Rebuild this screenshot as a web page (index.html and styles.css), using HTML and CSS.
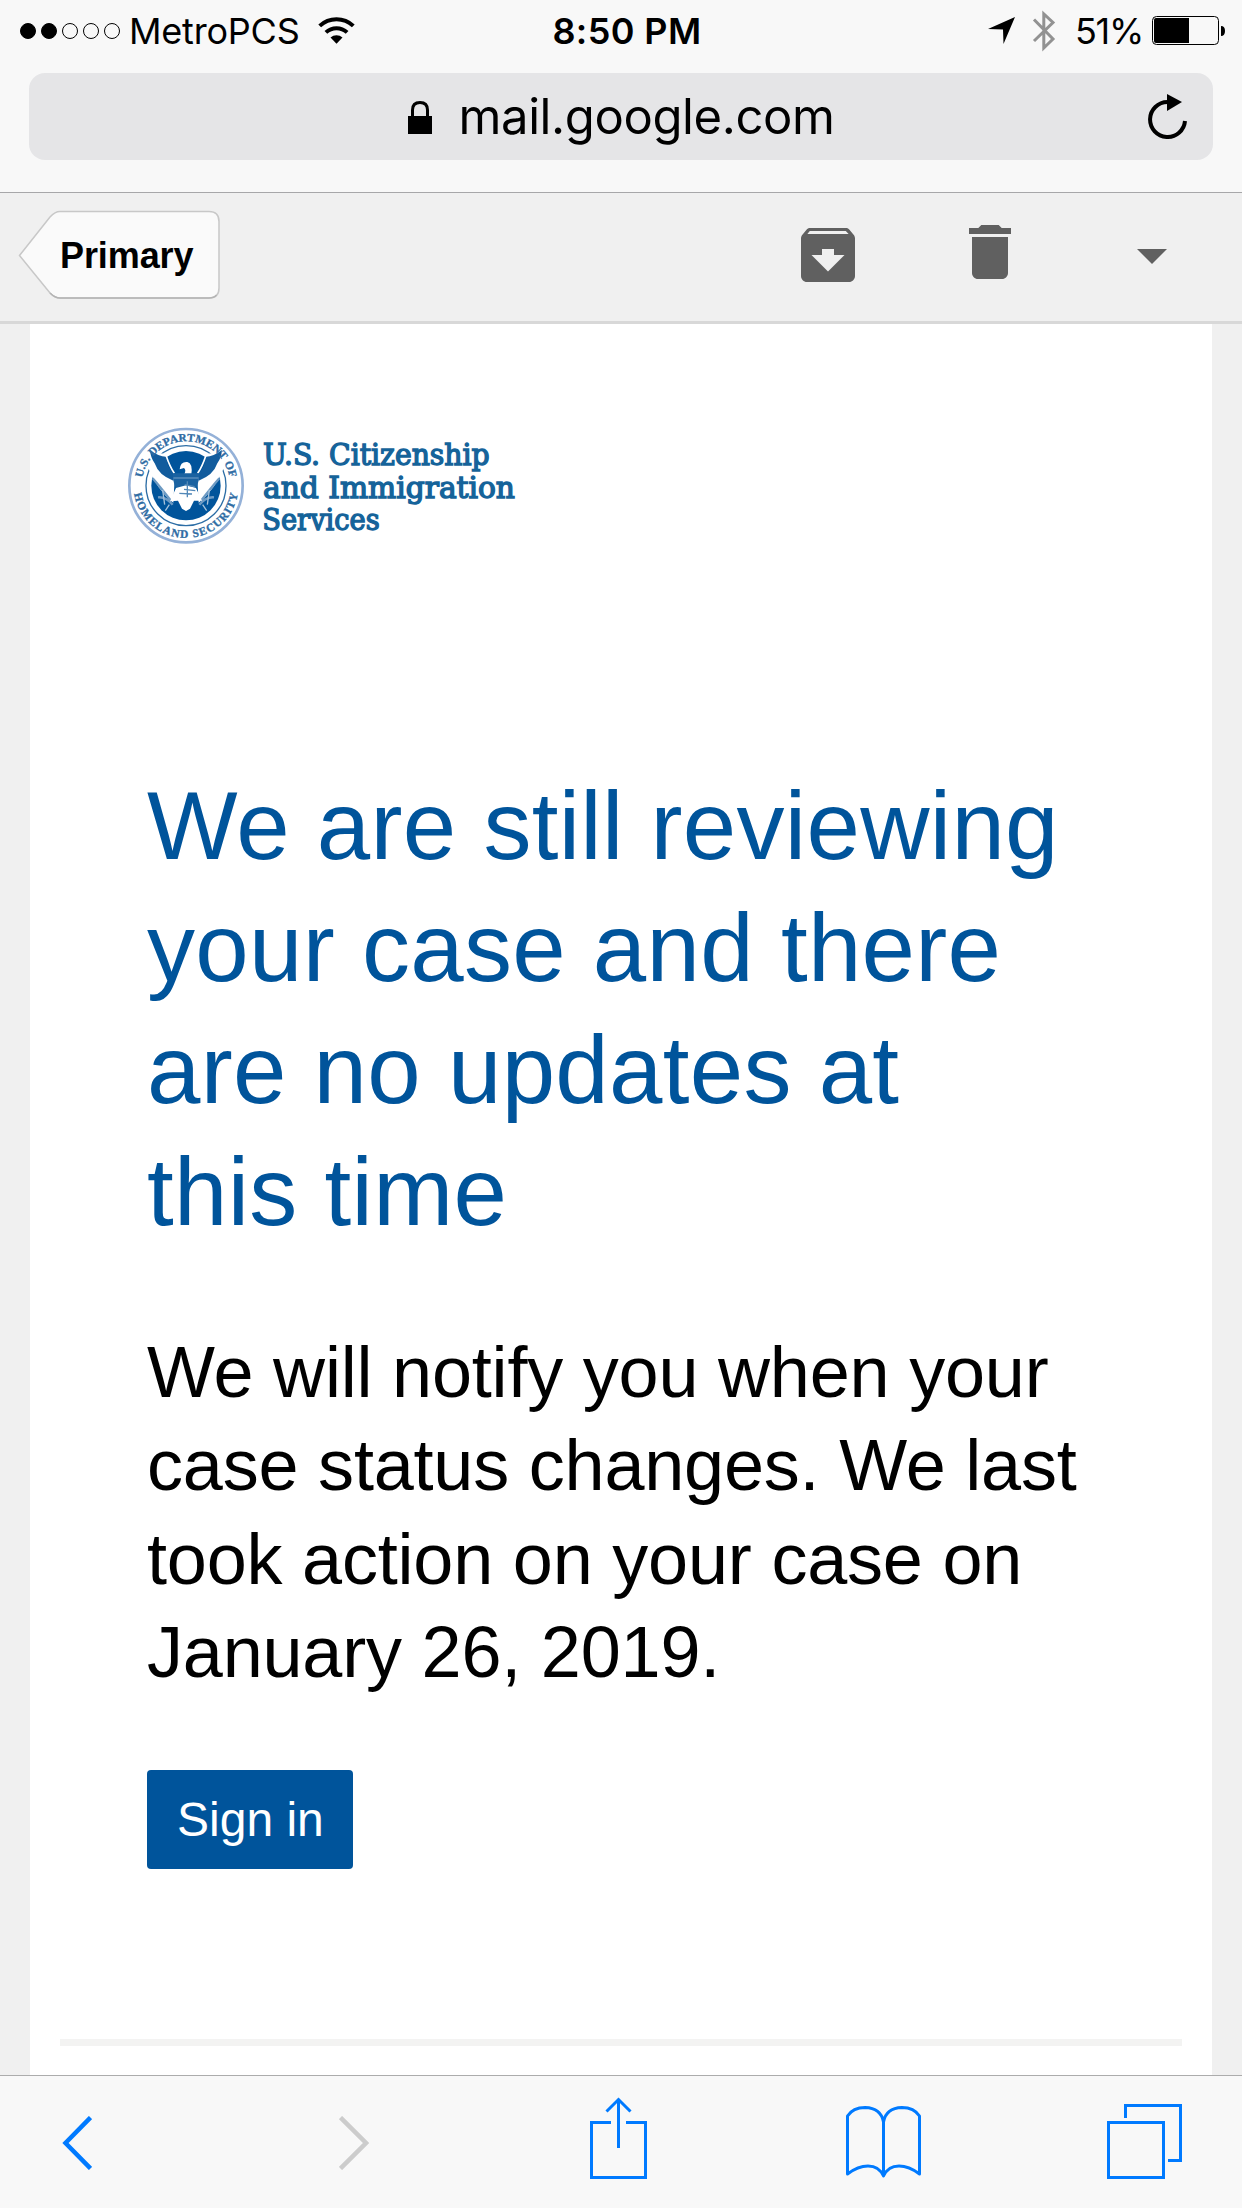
FILE: index.html
```html
<!DOCTYPE html>
<html lang="en">
<head>
    <meta charset="UTF-8">
    <meta name="viewport" content="width=device-width, initial-scale=1.0">
    <title>mail.google.com</title>
    <link rel="stylesheet" href="styles.css">
</head>
<body>
    <header class="browser-top">
        <div class="status-bar">
            <div class="status-left">
                <div class="signal">
                    <span class="dot full"></span>
                    <span class="dot full"></span>
                    <span class="dot"></span>
                    <span class="dot"></span>
                    <span class="dot"></span>
                </div>
                <span class="carrier">MetroPCS</span>
                <svg class="wifi" viewBox="0 0 37 27" fill="none" stroke="#000">
                    <path d="M1.7 8.9a24.6 24.6 0 0 1 33.6 0" stroke-width="4"/>
                    <path d="M7.9 15.4a15.6 15.6 0 0 1 21.2 0" stroke-width="4"/>
                    <path d="M12.5 20.6a8.7 8.7 0 0 1 12 0l-6 6.1z" fill="#000" stroke="none"/>
                </svg>
            </div>
            <span class="time">8:50 PM</span>
            <div class="status-right">
                <svg class="location" viewBox="0 0 27 27"><path d="M0 12L27 0 15.500 27 15 12.500z"/></svg>
                <svg class="bluetooth" viewBox="0 0 24 42"><path d="M2 9.500L21 29 11.800 38V4L21 12.500 2 31" fill="none" stroke="#929292" stroke-width="3"/></svg>
                <span class="percent">51%</span>
                <svg class="battery" viewBox="0 0 74 29">
                    <rect x=".5" y=".5" width="66" height="28" rx="4" fill="none" stroke="#000"/>
                    <rect x="2" y="2" width="35" height="25" rx="2"/>
                    <path d="M37 2v25h-4V2zM69 10q4 0 4 5t-4 5z"/>
                </svg>
            </div>
        </div>
        <div class="address">
            <div class="address-text">
                <svg class="lock" viewBox="0 0 24 33">
                    <path d="M0 15h24v18H0z"/>
                    <path d="M4.500 16V9q0-7.500 7.500-7.500T19.500 9v7" fill="none" stroke="#000" stroke-width="3"/>
                </svg>
                <span class="url">mail.google.com</span>
            </div>
            <svg class="reload" viewBox="0 0 39 45">
                <path d="M37 27a17.500 17.500 0 1 1-17.500-19" fill="none" stroke="#000" stroke-width="4"/>
                <path d="M19 0l15 8-15 9z"/>
            </svg>
        </div>
    </header>

    <nav class="mail-bar">
        <a class="back" href="#">
            <svg class="back-shape" viewBox="0 0 202 90">
                <path d="M1.500 45.500L32 7Q37 1.500 42 1.500H191Q201 1.500 201 11.500V78Q201 88 191 88H42Q37 88 32 83z" fill="#fafafa" stroke="#c8c8c8" stroke-width="1.500"/>
                <path d="M32 83Q37 88 42 88H191Q196 88 198.500 85" fill="none" stroke="#b4b4b4" stroke-width="1.500"/>
            </svg>
            <span class="back-label">Primary</span>
        </a>
        <svg class="mail-icon archive" viewBox="0 0 24 24"><path d="M20.540 5.230l-1.390-1.680C18.880 3.210 18.470 3 18 3H6c-.470 0-.880.210-1.160.550L3.460 5.230C3.170 5.570 3 6.020 3 6.500V19c0 1.100.9 2 2 2h14c1.100 0 2-.9 2-2V6.500c0-.480-.170-.930-.460-1.270zM12 17.500L6.500 12H10v-2h4v2h3.500L12 17.500zM5.120 5l.810-1h12l.940 1H5.120z"/></svg>
        <svg class="mail-icon trash" viewBox="0 0 24 24"><path d="M6 19c0 1.100.9 2 2 2h8c1.100 0 2-.9 2-2V7H6v12zM19 4h-3.100l-1-1H9.100l-1 1H5v2h14V4z"/></svg>
        <svg class="mail-icon more" viewBox="0 0 24 24"><path d="M7 10l5 5 5-5z"/></svg>
    </nav>

    <main class="message">
        <svg class="logo" viewBox="0 0 1290 450">
            <defs>
                <path id="sealTop" d="M95 227a133 133 0 0 1 266 0"/>
                <path id="sealBottom" d="M71 227a157 157 0 0 0 314 0"/>
            </defs>
            <circle cx="228" cy="227" r="170" fill="#fff" stroke="#94b1d8" stroke-width="8"/>
            <circle cx="228" cy="227" r="120" fill="#fff" stroke="#2c6da5" stroke-width="4"/>
            <circle cx="228" cy="227" r="104" fill="#00549b"/>
            <!-- wings -->
            <path d="M108 138L158 130Q162 178 194 206L190 278Q142 242 112 168z" fill="#fff"/>
            <path d="M348 138L298 130Q294 178 262 206L266 278Q314 242 344 168z" fill="#fff"/>
            <path d="M120 120Q146 140 168 140 172 178 194 192L190 212Q146 196 134 160 122 144 120 120z" fill="#125c9d"/>
            <path d="M336 120Q310 140 288 140 284 178 262 192L266 212Q310 196 322 160 334 144 336 120z" fill="#125c9d"/>
            <path d="M168 136Q180 172 193 190M288 136Q276 172 263 190" fill="none" stroke="#fff" stroke-width="5"/>
            <!-- olive branch and arrows -->
            <path d="M128 205Q150 230 184 274M144 262Q168 260 188 284M328 205Q306 230 272 274M312 262Q288 260 268 284" fill="none" stroke="#6d9ac3" stroke-width="7"/>
            <path d="M158 240l6 44M298 240l-6 44M178 284l-12 18M278 284l12 18" stroke="#a6c2db" stroke-width="4"/>
            <!-- head -->
            <path d="M209 178Q211 154 232 156 249 160 244 194H222Q230 180 222 174z" fill="#fff"/>
            <!-- shield -->
            <path d="M188 190H268Q268 240 228 270 188 240 188 190z" fill="#1a62a1"/>
            <path d="M190 204H266" stroke="#5f91be" stroke-width="4"/>
            <path d="M198 234L180 274 204 272 216 296 228 303 240 296 252 272 276 272 258 234 228 226z" fill="#fff"/>
            <path d="M224 224l30 6M222 238l34 4M208 250l38 2M232 214v48" stroke="#5288b8" stroke-width="4"/>
            <g class="seal-text">
                <text><textPath href="#sealTop" startOffset="24" textLength="370">U.S. DEPARTMENT OF</textPath></text>
                <text><textPath href="#sealBottom" startOffset="24" textLength="445">HOMELAND SECURITY</textPath></text>
            </g>
            <g class="agency">
                <text x="459" y="165" textLength="680" lengthAdjust="spacingAndGlyphs">U.S. Citizenship</text>
                <text x="459" y="263" textLength="756" lengthAdjust="spacingAndGlyphs">and Immigration</text>
                <text x="457" y="359" textLength="352" lengthAdjust="spacingAndGlyphs">Services</text>
            </g>
        </svg>
        <div class="content">
            <h1>We are still reviewing your case and there are no updates at this time</h1>
            <p>We will notify you when your case status changes. We last took action on your case on January 26, 2019.</p>
            <a class="btn" href="#">Sign in</a>
        </div>
        <hr>
    </main>

    <footer class="toolbar">
        <svg class="go-back" viewBox="0 0 30 54"><path d="M28.500 1.500L3.500 27l25 25.500" stroke-width="4.500"/></svg>
        <svg class="go-forward" viewBox="0 0 30 54"><path d="M1.500 1.500L27 27 1.500 52.500" stroke-width="4.500"/></svg>
        <svg class="share" viewBox="0 0 57 82">
            <path d="M21 25.500H1.500v55h54v-55H36M28.500 51V3M16.500 14.500l12-12 12 12" stroke-width="3"/>
        </svg>
        <svg class="book" viewBox="0 0 75 72">
            <path d="M37.500 70V16Q35 2 19 1.500 7 1.500 1.500 10V68Q12 60 22 60 33 60 37.500 70 42 60 53 60 63 60 73.500 68V10Q68 1.500 56 1.500 40 2 37.500 16" stroke-width="3" stroke-linejoin="round"/>
        </svg>
        <svg class="tabs" viewBox="0 0 75 75">
            <path d="M1.500 18.500h55v55h-55zM18.500 14V1.500h55v55H61" stroke-width="3"/>
        </svg>
    </footer>
</body>
</html>
```
FILE: styles.css
```css
* {
    box-sizing: border-box;
}
body {
    margin: 0;
    width: 1242px;
    height: 2208px;
    overflow: hidden;
    display: flex;
    flex-direction: column;
    background-color: #f0f0f0;
    font-family: "Liberation Sans", Arial, sans-serif;
    color: #000;
}
svg {
    display: block;
    flex-shrink: 0;
}
a {
    text-decoration: none;
}

/* status bar and address field */
.browser-top {
    height: 193px;
    background-color: #f8f8f8;
    border-bottom: 1px solid #a7a7a9;
    font-family: Inter, Roboto, sans-serif;
}
.status-bar {
    height: 73px;
    padding: 0 16px 12px 20px;
    display: grid;
    grid-template-columns: 1fr auto 1fr;
    align-items: center;
    font-size: 36px;
    line-height: 60px;
}
.status-left,
.status-right {
    display: flex;
    align-items: center;
}
.status-right {
    justify-content: flex-end;
}
.signal {
    display: flex;
    gap: 5px;
    margin-right: 9px;
}
.dot {
    width: 16px;
    height: 16px;
    border: 1px solid #000;
    border-radius: 50%;
}
.dot.full {
    background-color: #000;
}
.carrier {
    width: 189px;
    letter-spacing: -0.2px;
    margin-top: 1px;
}
.wifi {
    width: 37px;
    height: 27px;
}
.time {
    font-weight: 600;
    letter-spacing: 0.4px;
    margin: 1px 0 0 8px;
}
.location {
    width: 27px;
    height: 27px;
    margin-right: 17px;
}
.bluetooth {
    width: 24px;
    height: 42px;
    margin-right: 19px;
}
.percent {
    width: 77px;
    letter-spacing: -1.3px;
    margin-top: 1px;
}
.battery {
    width: 74px;
    height: 29px;
}
.address {
    height: 87px;
    margin: 0 29px;
    padding: 0 26px 0 65px;
    display: flex;
    align-items: center;
    background-color: #e5e5e7;
    border-radius: 16px;
}
.address-text {
    flex: 1;
    display: flex;
    align-items: center;
    justify-content: center;
    gap: 27px;
}
.lock {
    width: 24px;
    height: 33px;
    margin-top: 2px;
}
.url {
    font-size: 49px;
    line-height: 87px;
    letter-spacing: -0.4px;
}
.reload {
    width: 39px;
    height: 45px;
}

/* mail actions */
.mail-bar {
    height: 131px;
    padding-left: 18px;
    display: flex;
    align-items: flex-start;
    border-bottom: 3px solid #d8d8d8;
}
.back {
    width: 202px;
    height: 91px;
    margin: 17px 572px 0 0;
    position: relative;
    color: #000;
}
.back-shape {
    width: 202px;
    height: 90px;
}
.back-label {
    position: absolute;
    left: 42px;
    top: 25px;
    font-size: 36px;
    line-height: 41px;
    font-weight: bold;
    letter-spacing: -0.1px;
}
.mail-icon {
    width: 72px;
    height: 72px;
    fill: #606060;
}
.archive {
    margin-top: 26px;
}
.trash {
    margin: 23px 90px 0;
}
.more {
    margin-top: 26px;
}

/* message */
.message {
    flex: 1;
    margin: 0 30px;
    padding-top: 86px;
    background-color: #fff;
}
.logo {
    width: 430px;
    height: 150px;
    margin-left: 80px;
}
.seal-text {
    font-family: "Liberation Serif", serif;
    font-size: 34px;
    font-weight: bold;
    fill: #2f6ca4;
    stroke: #2f6ca4;
    stroke-width: 1px;
}
.agency {
    font-family: "DejaVu Serif Condensed", "DejaVu Serif", serif;
    font-size: 92px;
    fill: #15639a;
    stroke: #15639a;
    stroke-width: 4px;
}
.content {
    padding: 205px 117px 0;
}
h1 {
    margin: 0 0 73px;
    font-size: 96px;
    line-height: 122px;
    font-weight: normal;
    letter-spacing: 0.3px;
    color: #00549b;
}
p {
    margin: 0 0 71px;
    font-size: 72px;
    line-height: 93.3px;
    letter-spacing: -0.2px;
}
.btn {
    display: block;
    width: 206px;
    height: 99px;
    padding: 0 30px;
    border-radius: 4px;
    background-color: #00549b;
    color: #fff;
    font-size: 48px;
    line-height: 99px;
    white-space: nowrap;
}
h1 {
    padding-right: 20px;
}
hr {
    height: 7px;
    margin: 170px 30px 0;
    border: none;
    background-color: #f3f3f2;
}

/* browser toolbar */
.toolbar {
    height: 133px;
    padding-left: 62px;
    display: flex;
    align-items: flex-start;
    background-color: #f8f8f8;
    border-top: 1px solid #acacac;
}
.toolbar svg {
    fill: none;
    stroke: #007aff;
}
.go-back,
.go-forward {
    width: 30px;
    height: 54px;
    margin-top: 40px;
}
.toolbar .go-forward {
    margin-left: 247px;
    stroke: #ccc;
}
.share {
    width: 57px;
    height: 82px;
    margin: 21px 0 0 221px;
}
.book {
    width: 75px;
    height: 72px;
    margin: 30px 0 0 199px;
}
.tabs {
    width: 75px;
    height: 75px;
    margin: 28px 0 0 186px;
}
```
